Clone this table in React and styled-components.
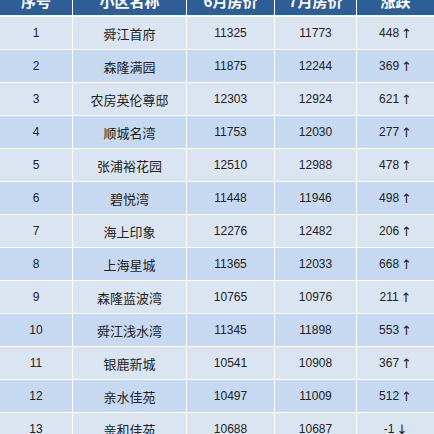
import React from 'react';
import styled, { createGlobalStyle } from 'styled-components';

const GlobalStyle = createGlobalStyle`
  html, body {
    margin: 0;
    padding: 0;
    background: #ffffff;
    overflow: hidden;
  }
`;

const rows = [
  [1, '舜江首府', 11325, 11773, 448],
  [2, '森隆满园', 11875, 12244, 369],
  [3, '农房英伦尊邸', 12303, 12924, 621],
  [4, '顺城名湾', 11753, 12030, 277],
  [5, '张浦裕花园', 12510, 12988, 478],
  [6, '碧悦湾', 11448, 11946, 498],
  [7, '海上印象', 12276, 12482, 206],
  [8, '上海星城', 11365, 12033, 668],
  [9, '森隆蓝波湾', 10765, 10976, 211],
  [10, '舜江浅水湾', 11345, 11898, 553],
  [11, '银鹿新城', 10541, 10908, 367],
  [12, '亲水佳苑', 10497, 11009, 512],
  [13, '亲和佳苑', 10688, 10687, -1],
];

const App = () => {
  return (
    <>
      <GlobalStyle />
      <Table>
        <HeadRow>
          <HeadCell>序号</HeadCell>
          <HeadCell>小区名称</HeadCell>
          <HeadCell>6月房价</HeadCell>
          <HeadCell>7月房价</HeadCell>
          <HeadCell>涨跌</HeadCell>
        </HeadRow>
        {rows.map(([no, name, june, july, diff]) => {
          const even = no % 2 === 0;
          return (
            <Row key={no}>
              <Cell $even={even}>{no}</Cell>
              <Cell $even={even} $cjk>{name}</Cell>
              <Cell $even={even}>{june}</Cell>
              <Cell $even={even}>{july}</Cell>
              <Cell $even={even}>
                {diff}
                <Arrow>{diff >= 0 ? '↑' : '↓'}</Arrow>
              </Cell>
            </Row>
          );
        })}
      </Table>
    </>
  );
};

export default App;

const cols = '72px 113px 87px 81px 77px';

const Table = styled.div`
  display: flex;
  flex-direction: column;
  gap: 1px;
  margin-top: -15px;
  width: 434px;
  background: #ffffff;
`;

const HeadRow = styled.div`
  display: grid;
  grid-template-columns: ${cols};
  column-gap: 1px;
  height: 30px;
  margin-bottom: 1px;
`;

const HeadCell = styled.div`
  display: flex;
  align-items: center;
  justify-content: center;
  background: #2f5d95;
  color: #ffffff;
  font-family: 'Noto Sans CJK SC', sans-serif;
  font-weight: bold;
  font-size: 15px;
`;

const Row = styled.div`
  display: grid;
  grid-template-columns: ${cols};
  column-gap: 1px;
  height: 32px;
`;

const Cell = styled.div`
  display: flex;
  align-items: center;
  justify-content: center;
  background: ${(p) => (p.$even ? '#c6d9f0' : '#dbe5f1')};
  color: #222222;
  font-family: ${(p) =>
    p.$cjk
      ? "'Noto Sans CJK SC', sans-serif"
      : "'Liberation Sans', 'Noto Sans CJK SC', sans-serif"};
  font-size: ${(p) => (p.$cjk ? '13px' : '12px')};
`;

const Arrow = styled.span`
  margin-left: 2px;
  font-family: 'DejaVu Sans', sans-serif;
  font-size: 13px;
`;
